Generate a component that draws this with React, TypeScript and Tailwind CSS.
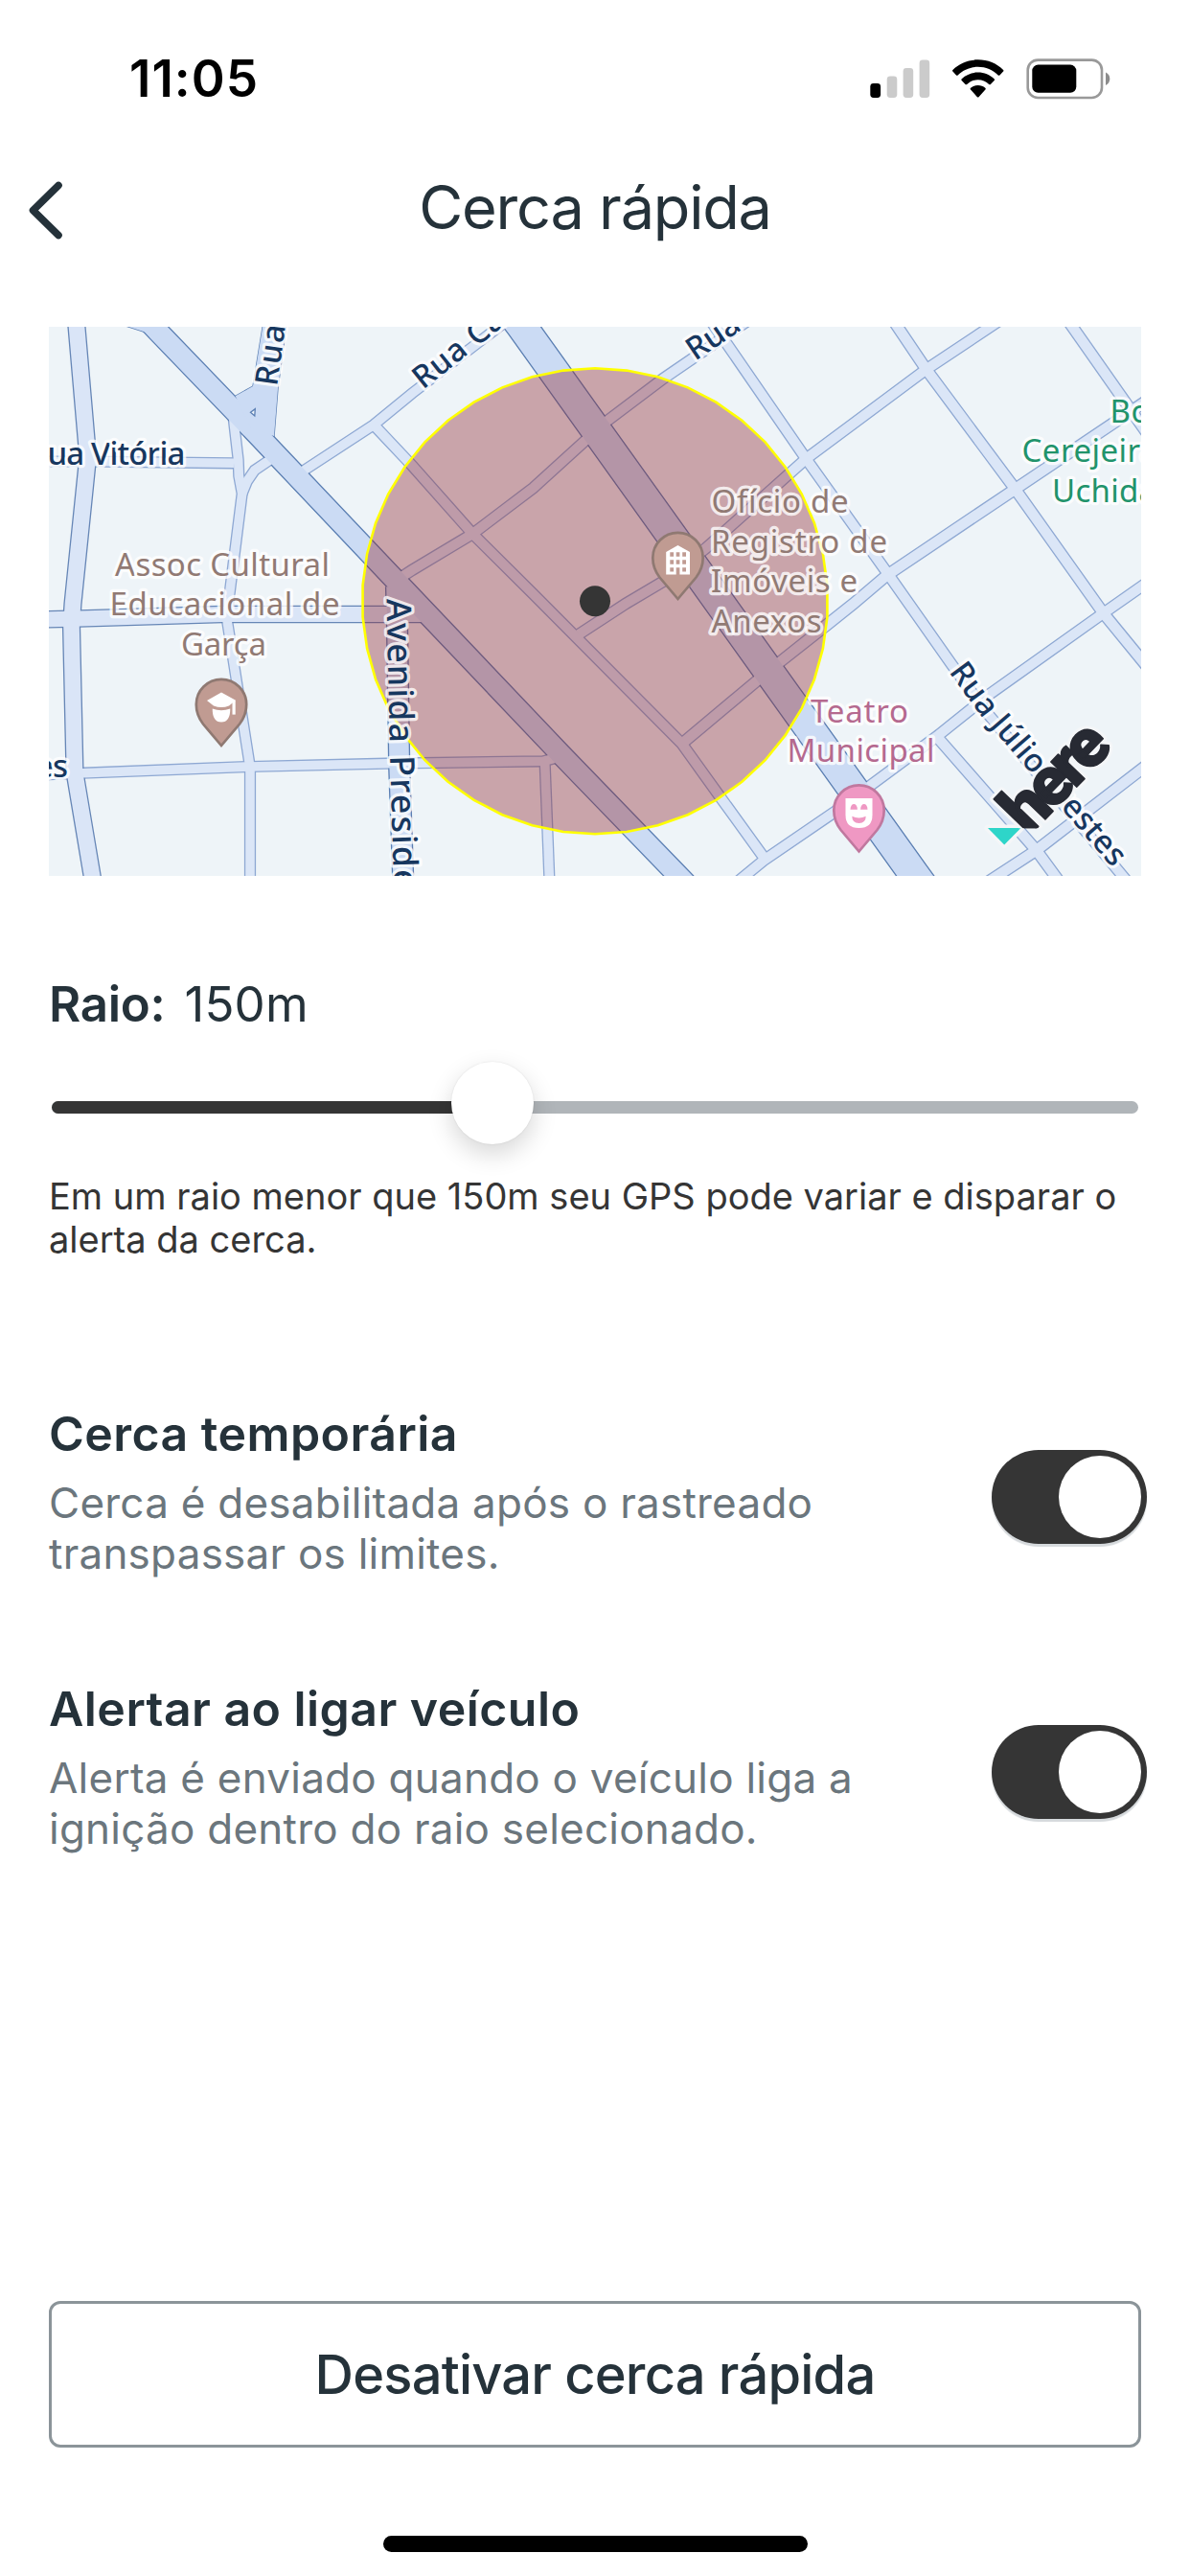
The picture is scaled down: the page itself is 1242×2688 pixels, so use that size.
import { useState } from 'react'

interface Road {
  d: string
  width: number
  kind: 'minor' | 'medium' | 'major'
}

interface MapLabel {
  text: string
  x: number
  y: number
  length?: number
  anchor?: 'start' | 'middle' | 'end'
  color: string
  rotate?: number
}

const CENTER = { x: 621, y: 627.3 }

const ROADS: Road[] = [
  // local streets
  { kind: 'minor', width: 11, d: 'M40 481.5H90L244 483.3' },
  { kind: 'minor', width: 11, d: 'M243.5 435L248.7 480L249.3 496.7L252.7 515L238.7 626.7L237.3 649.3L260 794.3L261 805V920' },
  { kind: 'minor', width: 11, d: 'M252.7 515L258 502L265.7 490.7L283 479' },
  { kind: 'minor', width: 11, d: 'M314 493L390 443.3L430 410.5L535 330' },
  { kind: 'minor', width: 11.5, d: 'M390 443.3L430 485.7L493.3 557L556.7 620L711.7 776L751.7 831.7L796.7 894' },
  { kind: 'minor', width: 11.5, d: 'M770 920L796.7 898L870 848L980 766.7L1033.3 724L1148 642.3L1200 606' },
  { kind: 'minor', width: 11.5, d: 'M735 325L756.7 356L841 478.3L926 597.7L993 693L1027 740L1180 924' },
  { kind: 'minor', width: 11.5, d: 'M630 442L692.3 395L780 335' },
  { kind: 'minor', width: 11.5, d: 'M615 456L556.7 509L493.3 557L430 595L410 608' },
  { kind: 'minor', width: 11.5, d: 'M604 662L653 630L691.7 607L736.7 572L841 479L966.7 385.5L1050 330' },
  { kind: 'minor', width: 12, d: 'M711.7 776L789.3 711L815 690L863 652L890.7 630L926 600L1059.3 510.5L1200 416' },
  { kind: 'minor', width: 12, d: 'M926 325L966.7 385.5L1059.3 510L1151.7 640L1200 699' },
  { kind: 'minor', width: 12, d: 'M1108 325L1200 456' },
  { kind: 'minor', width: 12, d: 'M978 769L1081.7 887.3L1110 926' },
  { kind: 'minor', width: 12, d: 'M1030 921L1081.7 887.3L1200 796' },
  { kind: 'minor', width: 11, d: 'M40 808.5L86.7 806.7L260 800L403 796.7L566.7 794.3L580 791' },
  { kind: 'minor', width: 11, d: 'M568.7 797L573.5 920' },
  // collectors
  { kind: 'medium', width: 18, d: 'M79 325L80 341L91.7 477L76 630L74.5 653L78 806L98 925' },
  { kind: 'medium', width: 17.5, d: 'M40 646.5L83 645.5L232 641H440' },
  // avenues
  { kind: 'major', width: 22, d: 'M413.5 612L414.3 640L416.7 800L421 925' },
  { kind: 'major', width: 22.5, d: 'M150 330L164.7 345.7L270 455L407.5 600L585 786.7L716 922' },
  { kind: 'major', width: 32, d: 'M533 325L545 341L744.7 620L954.7 913.3L966 929' },
]

// Widened junction where the side street meets the avenue
const JUNCTION = 'M245.7 413.3L264 403L276 330L300 330L290 405L286 455L262 447Z'
const RAMP = 'M128 339L150 346L166 352L172 338Z'

const ROAD_COLORS = {
  minor: { edge: '#8ea8d3', fill: '#dbe6f7' },
  medium: { edge: '#6686b6', fill: '#dae5f7' },
  major: { edge: '#5a7eb2', fill: '#cbdbf4' },
}

const BROWN = '#917a74'
const GREEN = '#21936b'
const PINK = '#b5698f'
const NAVY = '#17375f'

const STREET_LABELS: MapLabel[] = [
  { text: 'Rua Vitória', x: 193.5, y: 485.3, length: 164, anchor: 'end', color: NAVY },
  { text: 'es', x: 71, y: 811, length: 34, anchor: 'end', color: NAVY },
  { text: 'Rua', x: 289, y: 403.5, length: 64, color: NAVY, rotate: -82 },
  { text: 'Rua Ca', x: 441.5, y: 407, length: 112, color: NAVY, rotate: -38.5 },
  { text: 'Rua', x: 725.5, y: 377, length: 60, color: NAVY, rotate: -34 },
]

const PLACE_LABELS: MapLabel[] = [
  { text: 'Assoc Cultural', x: 232, y: 600.7, length: 224, anchor: 'middle', color: BROWN },
  { text: 'Educacional de', x: 234.5, y: 642.3, length: 240, anchor: 'middle', color: BROWN },
  { text: 'Garça', x: 233.5, y: 683.7, length: 89, anchor: 'middle', color: BROWN },
  { text: 'Ofício de', x: 742.5, y: 535, length: 143, color: BROWN },
  { text: 'Registro de', x: 742, y: 576.7, length: 184, color: BROWN },
  { text: 'Imóveis e', x: 742, y: 618.3, length: 153, color: BROWN },
  { text: 'Anexos', x: 742.5, y: 659.7, length: 115, color: BROWN },
  { text: 'Bo', x: 1158.5, y: 441, length: 42, color: GREEN },
  { text: 'Cerejeira', x: 1066.5, y: 482.3, length: 142, color: GREEN },
  { text: 'Uchida', x: 1098, y: 523.7, length: 109, color: GREEN },
  { text: 'Teatro', x: 897, y: 754, length: 102, anchor: 'middle', color: PINK },
  { text: 'Municipal', x: 898.5, y: 795, length: 154, anchor: 'middle', color: PINK },
]

const HALO = {
  stroke: '#fff',
  strokeWidth: 6.5,
  strokeOpacity: 0.78,
  strokeLinejoin: 'round' as const,
  paintOrder: 'stroke',
}

function polygonPoints(sides: number, radius: number) {
  return Array.from({ length: sides }, (_, i) => {
    const a = (i / sides) * Math.PI * 2 - Math.PI / 2
    return `${(CENTER.x + radius * Math.cos(a)).toFixed(1)},${(CENTER.y + radius * Math.sin(a)).toFixed(1)}`
  }).join(' ')
}

function Labels({ items }: { items: MapLabel[] }) {
  return items.map((l) => (
    <text
      key={`${l.text}-${l.x}`}
      transform={`translate(${l.x} ${l.y}) rotate(${l.rotate ?? 0})`}
      textLength={l.length}
      textAnchor={l.anchor ?? 'start'}
      fill={l.color}
      {...HALO}
    >
      {l.text}
    </text>
  ))
}

function Pin({ x, y, fill, stroke, children }: { x: number; y: number; fill: string; stroke: string; children: React.ReactNode }) {
  return (
    <g transform={`translate(${x} ${y})`}>
      <path
        d="M0 43L-19 20.5C-24 14 -26.2 7 -26.2 0A26.2 26.2 0 0 1 26.2 0C26.2 7 24 14 19 20.5Z"
        fill={fill}
        stroke={stroke}
        strokeWidth={2.7}
      />
      <g fill="#fff">{children}</g>
    </g>
  )
}

function RoadLayer() {
  return (
    <g fill="none">
      {(['minor', 'medium', 'major'] as const).map((kind) => {
        const roads = ROADS.filter((r) => r.kind === kind)
        return roads.map((r) => (
          <path key={r.d} d={r.d} stroke={ROAD_COLORS[kind].edge} strokeWidth={r.width + 1.2} />
        ))
      })}
      <path d={JUNCTION} stroke={ROAD_COLORS.major.edge} strokeWidth={1.4} />
      <path d={RAMP} stroke={ROAD_COLORS.major.edge} strokeWidth={1.4} />
      {ROADS.map((r) => (
        <path key={r.d} d={r.d} stroke={ROAD_COLORS[r.kind].fill} strokeWidth={r.width - 1.4} />
      ))}
      <path d={JUNCTION} fill={ROAD_COLORS.major.fill} />
      <path d={RAMP} fill={ROAD_COLORS.major.fill} />
      <path d="M261.5 430.3L266.3 426.7L265.8 434Z" fill="#eef4f8" stroke="#5a7eb2" strokeWidth={1.3} />
    </g>
  )
}

function HereLogo() {
  return (
    <g>
      <clipPath id="here-cut">
        <rect x="1000" y="700" width="191" height="164.2" />
      </clipPath>
      <path
        d="M1031 864H1065.5L1048.2 881.6Z"
        fill="#2ed5c9"
        stroke="#f4f6f8"
        strokeWidth={7}
        strokeLinejoin="round"
        paintOrder="stroke"
      />
      <g
        clipPath="url(#here-cut)"
        className="font-['Roboto'] font-black"
        fontSize={71}
        fill="#272a33"
        strokeLinejoin="round"
      >
        <text transform="translate(1073.5 873) rotate(-46)" textLength={129} stroke="#f4f6f8" strokeWidth={8} paintOrder="stroke">
          here
        </text>
        <text transform="translate(1073.5 873) rotate(-46)" textLength={129} stroke="#272a33" strokeWidth={1.6} aria-hidden="true">
          here
        </text>
      </g>
    </g>
  )
}

function FenceMap() {
  return (
    <svg viewBox="51 341 1140 573" className="mx-[51px] mt-[74px] block h-[573px] w-[1140px] shrink-0 overflow-hidden bg-[#eef4f8]">
      <RoadLayer />
      <polygon points={polygonPoints(46, 243)} fill="rgba(143,33,43,0.38)" stroke="#ffff00" strokeWidth={2.6} />
      <circle cx={CENTER.x} cy={CENTER.y} r={16} fill="#353535" />

      <g className="font-['Noto_Sans',sans-serif]" fontSize={33}>
        <Labels items={PLACE_LABELS} />
      </g>
      <g className="font-['Noto_Sans',sans-serif] font-medium" fontSize={33}>
        <Labels items={STREET_LABELS} />
        <path id="street-prestes" d="M990 701L1021 743L1175 922" fill="none" />
        <path id="street-avenida" d="M403.5 625L406.5 770L412 960" fill="none" />
        <text textLength={267} fill={NAVY} {...HALO}>
          <textPath href="#street-prestes">Rua Júlio Prestes</textPath>
        </text>
        <text fontSize={35.5} textLength={303} fill={NAVY} {...HALO}>
          <textPath href="#street-avenida">Avenida Preside</textPath>
        </text>
      </g>

      <Pin x={231} y={735} fill="#c09b92" stroke="#8f7972">
        <path d="M-15 -4L0 -12.5L15 -4.2L8 1.4Q0 4.5 -8 1.4Z" />
        <rect x="11.5" y="-4" width="3.2" height="14.6" />
        <path d="M-9.3 4.4Q0 8 9.3 4.4Q9.3 18.4 0 18.4Q-9.3 18.4 -9.3 4.4Z" />
      </Pin>
      <Pin x={707.5} y={582} fill="#c09b92" stroke="#8f7972">
        <path
          fillRule="evenodd"
          d="M-12.3 -6L0 -13L12.5 -6V17.5H1.9V10.2H-1.8V17.5H-12.3ZM-8.2 -5.8V-1.2H-4.4V-5.8ZM-1.8 -5.8V-1.2H1.9V-5.8ZM4.7 -5.8V-1.2H8.5V-5.8ZM-8.2 2.2V6.8H-4.4V2.2ZM-1.8 2.2V6.8H1.9V2.2ZM4.7 2.2V6.8H8.5V2.2ZM-8.2 10.2V14.6H-4.4V10.2ZM4.7 10.2V14.6H8.5V10.2Z"
        />
      </Pin>
      <Pin x={896.5} y={845.5} fill="#ef98c3" stroke="#c0789f">
        <path d="M-14 -12.6H14V5Q14 18.5 0 18.5Q-14 18.5 -14 5Z" />
        <g fill="#ef98c3">
          <path d="M-9 -0.8C-9 -8.5 -1.6 -8.5 -1.6 -0.8Z" />
          <path d="M1.6 -0.8C1.6 -8.5 9 -8.5 9 -0.8Z" />
          <path d="M-7.2 6.3Q0 9.5 7.2 6.3Q7.2 13.4 0 13.4Q-7.2 13.4 -7.2 6.3Z" />
        </g>
      </Pin>
      <HereLogo />
    </svg>
  )
}

function StatusBar() {
  return (
    <div className="flex h-[165px] shrink-0 items-center justify-between pr-[83px] pl-[135px] text-black">
      <span className="text-[53px] leading-none font-semibold tracking-[1px]">11:05</span>
      <svg viewBox="908 61 251 43" className="h-[43px] w-[251px]">
        <rect x="908.3" y="87" width="10.8" height="15" rx="3.4" />
        <g fill="#cbcbcb">
          <rect x="925.7" y="79.5" width="10.6" height="22.5" rx="3.4" />
          <rect x="942.6" y="71" width="10.6" height="31" rx="3.4" />
          <rect x="959.6" y="62.5" width="10.6" height="39.5" rx="3.4" />
        </g>
        <path d="M1020.7 62.3C1010.4 62.3 1001 66.3 994.4 72.9Q993.6 73.8 994.4 74.6L998 78.4Q998.8 79.2 999.7 78.4C1005.2 73 1012.6 69.8 1020.7 69.8S1036.2 73 1041.7 78.4Q1042.6 79.2 1043.4 78.4L1047.1 74.6Q1047.9 73.8 1047.1 72.9C1040.4 66.3 1031 62.3 1020.7 62.3Z" />
        <path d="M1020.7 75.6C1014.2 75.6 1008.2 78.1 1003.8 82.3Q1002.9 83.2 1003.7 84L1007.5 87.9Q1008.3 88.6 1009.2 87.9C1012.2 85 1016.2 83.2 1020.7 83.2S1029.2 85 1032.2 87.9Q1033.1 88.6 1033.9 87.9L1037.7 84Q1038.5 83.2 1037.6 82.3C1033.2 78.1 1027.2 75.6 1020.7 75.6Z" />
        <path d="M1020.7 89C1017.8 89 1015.2 90 1013.1 91.8Q1012.2 92.7 1013 93.5L1019.9 101.2Q1020.7 102 1021.5 101.2L1028.4 93.5Q1029.2 92.7 1028.3 91.8C1026.2 90 1023.6 89 1020.7 89Z" />
        <rect x="1072.7" y="62.6" width="77.3" height="39.4" rx="10.5" fill="none" stroke="#999" strokeWidth="2.6" />
        <rect x="1077.3" y="67.6" width="46" height="29.2" rx="6.2" />
        <path d="M1154 75.6Q1158.3 77.6 1158.3 82.3T1154 89Z" fill="#8c8c8c" />
      </svg>
    </div>
  )
}

function Header() {
  return (
    <header className="relative flex h-[102px] shrink-0 items-center justify-center">
      <button className="absolute top-[22px] left-[28px]" aria-label="Voltar">
        <svg width="40" height="64" viewBox="0 0 40 64" fill="none" stroke="#25323a" strokeWidth="7.6" strokeLinecap="round" strokeLinejoin="round">
          <path d="M33 6.5L6.5 32.5L33 58.5" />
        </svg>
      </button>
      <h1 className="text-[63px] leading-none font-normal tracking-[-1.2px]">Cerca rápida</h1>
    </header>
  )
}

function RadiusSlider({ value }: { value: number }) {
  return (
    <div className="relative mx-[54px] mt-[31px] flex h-[86px] shrink-0 items-center">
      <div className="mt-[9px] h-[13px] w-full overflow-hidden rounded-full bg-[#b0b5b9]">
        <div className="h-full bg-[#353535]" style={{ width: `${value}%` }} />
      </div>
      <div
        className="absolute top-0 size-[86px] -translate-x-1/2 rounded-full bg-white shadow-[0_0_2px_rgba(0,0,0,0.1),0_10px_26px_rgba(0,0,0,0.16)]"
        style={{ left: `${value}%` }}
      />
    </div>
  )
}

function Toggle({ on, onChange }: { on: boolean; onChange: () => void }) {
  return (
    <button
      role="switch"
      aria-checked={on}
      onClick={onChange}
      className={`mt-[47px] -mr-[6px] flex h-[98px] w-[162px] shrink-0 items-center rounded-full px-[6px] shadow-[0_3px_1px_#d5d9dc] ${
        on ? 'justify-end bg-[#353535]' : 'justify-start bg-[#b0b5b9]'
      }`}
    >
      <span className="size-[86px] rounded-full bg-white" />
    </button>
  )
}

function SettingRow({
  title,
  lines,
  on,
  onChange,
}: {
  title: string
  lines: string[]
  on: boolean
  onChange: () => void
}) {
  return (
    <div className="flex h-[182px] items-start justify-between">
      <div className="whitespace-nowrap">
        <h2 className="text-[50px] leading-[60px] font-semibold tracking-[0.45px]">{title}</h2>
        <div className="mt-4 text-[44px] leading-[53px] tracking-[0.24px] text-[#6b767d]">
          {lines.map((line) => (
            <p key={line}>{line}</p>
          ))}
        </div>
      </div>
      <Toggle on={on} onChange={onChange} />
    </div>
  )
}

export default function App() {
  const [temporary, setTemporary] = useState(true)
  const [ignition, setIgnition] = useState(true)

  return (
    <div className="flex h-[2688px] w-[1242px] flex-col overflow-hidden bg-white font-['Inter',sans-serif] text-[#25323a]">
      <StatusBar />
      <Header />
      <FenceMap />

      <div className="mx-[51px] mt-[103px] flex h-[60px] shrink-0 items-center gap-[20px] text-[51px] leading-none">
        <span className="font-semibold tracking-[-0.3px]">Raio:</span>
        <span className="tracking-[0.2px]">150m</span>
      </div>
      <RadiusSlider value={40.6} />
      <p className="mx-[51px] mt-[32px] shrink-0 text-[38px] leading-[45.4px] whitespace-nowrap text-[#353535]">
        Em um raio menor que 150m seu GPS pode variar e disparar o
        <br />
        alerta da cerca.
      </p>

      <div className="mx-[51px] mt-[149px] flex flex-col gap-[105px]">
        <SettingRow
          title="Cerca temporária"
          lines={['Cerca é desabilitada após o rastreado', 'transpassar os limites.']}
          on={temporary}
          onChange={() => setTemporary(!temporary)}
        />
        <SettingRow
          title="Alertar ao ligar veículo"
          lines={['Alerta é enviado quando o veículo liga a', 'ignição dentro do raio selecionado.']}
          on={ignition}
          onChange={() => setIgnition(!ignition)}
        />
      </div>

      <button className="mx-[51px] mt-auto h-[153px] shrink-0 rounded-[12px] border-[3px] border-[#8b9499] text-[56px] leading-none font-medium tracking-[-0.8px]">
        Desativar cerca rápida
      </button>
      <div className="mx-auto mt-[92px] mb-[25px] h-[17px] w-[443px] shrink-0 rounded-full bg-black" />
    </div>
  )
}
